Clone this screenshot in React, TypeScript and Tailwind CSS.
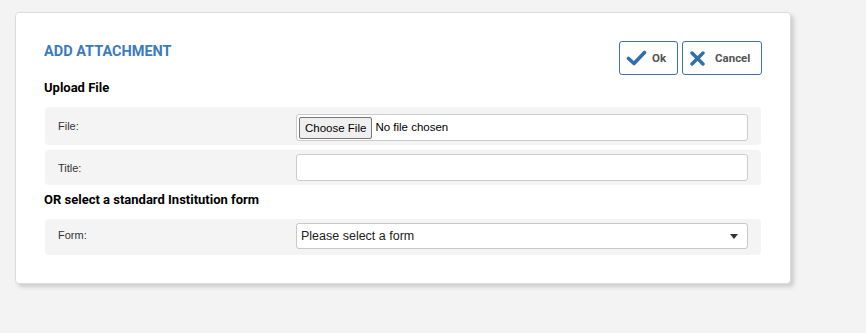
import React from 'react'

const font = { fontFamily: 'Roboto, "Liberation Sans", Arial, sans-serif' }
const arial = { fontFamily: '"Liberation Sans", Arial, sans-serif' }

function CheckIcon() {
  return (
    <svg width="21" height="16" viewBox="0 0 21 16" className="shrink-0">
      <path d="M2.5 8.5 L8 13.5 L18.5 2.5" fill="none" stroke="#2f6fae" strokeWidth="3.6" strokeLinecap="round" strokeLinejoin="round" />
    </svg>
  )
}

function CrossIcon() {
  return (
    <svg width="15" height="15" viewBox="0 0 15 15" className="shrink-0">
      <path d="M2 2 L13 13 M13 2 L2 13" fill="none" stroke="#2f6fae" strokeWidth="3.4" strokeLinecap="round" />
    </svg>
  )
}

function FieldRow({ label, pad, labelClass = '', children }: { label: string; pad: string; labelClass?: string; children: React.ReactNode }) {
  return (
    <div className={`flex items-center bg-[#f4f4f4] rounded-[4px] pl-[13px] pr-[13px] ${pad}`}>
      <div className={`w-[238px] shrink-0 text-[11px] text-[#333] leading-[14px] ${labelClass}`} style={arial}>{label}</div>
      <div className="flex-1 min-w-0">{children}</div>
    </div>
  )
}

export default function App() {
  return (
    <div className="min-h-[333px] w-[866px] bg-[#f3f3f3] pt-[12px] pl-[15px]" style={font}>
      <div className="w-[776px] h-[272px] bg-white border border-[#dcdcdc] rounded-[4px] shadow-[3px_3px_4px_rgba(0,0,0,0.16)] pt-[28px] pl-[28px] pr-[28px]">
        <div className="flex items-start justify-between">
          <h2 className="mt-[2px] text-[14.5px] leading-[18px] font-bold text-[#3a7bbf]">ADD ATTACHMENT</h2>
          <div className="flex gap-[4px]">
            <button className="h-[34px] w-[59px] border border-[#3f72a8] rounded-[3px] bg-white flex items-center pl-[6px] gap-[5px]">
              <CheckIcon />
              <span className="mt-[2px] text-[11.5px] font-bold text-[#555]">Ok</span>
            </button>
            <button className="h-[34px] w-[80px] border border-[#3f72a8] rounded-[3px] bg-white flex items-center pl-[7px] gap-[10px]">
              <CrossIcon />
              <span className="mt-[2px] text-[11.5px] font-bold text-[#555]">Cancel</span>
            </button>
          </div>
        </div>

        <h3 className="mt-[5px] text-[13px] leading-[16px] font-bold text-black">Upload File</h3>

        <div className="mt-[11px] ml-[1px] mr-[1px] flex flex-col gap-[5px]">
          <FieldRow label="File:" pad="pt-[7px] pb-[4px]" labelClass="-mt-[4px]">
            <div className="h-[27px] border border-[#ccc] rounded-[3px] bg-white flex items-center pl-[2px]" style={arial}>
              <span className="h-[22px] px-[5px] border border-[#767676] bg-[#efefef] rounded-[2px] text-[11.5px] leading-[20px] text-black">
                Choose File
              </span>
              <span className="ml-[3px] text-[11.5px] text-black">No file chosen</span>
            </div>
          </FieldRow>
          <FieldRow label="Title:" pad="py-[4px]">
            <div className="h-[27px] border border-[#ccc] rounded-[3px] bg-white" />
          </FieldRow>
        </div>

        <h3 className="mt-[7px] text-[13px] leading-[16px] font-bold text-black">OR select a standard Institution form</h3>

        <div className="mt-[11px] ml-[1px] mr-[1px]">
          <FieldRow label="Form:" pad="pt-[4px] pb-[6px]" labelClass="-mt-[2px]">
            <div className="h-[26px] border border-[#c8c8c8] rounded-[3px] bg-white flex items-center justify-between pl-[4px] pr-[9px]" style={arial}>
              <span className="text-[12.5px] text-[#222]">Please select a form</span>
              <svg width="8" height="5" viewBox="0 0 8 5">
                <path d="M0 0 H8 L4 5 Z" fill="#333" />
              </svg>
            </div>
          </FieldRow>
        </div>
      </div>
    </div>
  )
}
